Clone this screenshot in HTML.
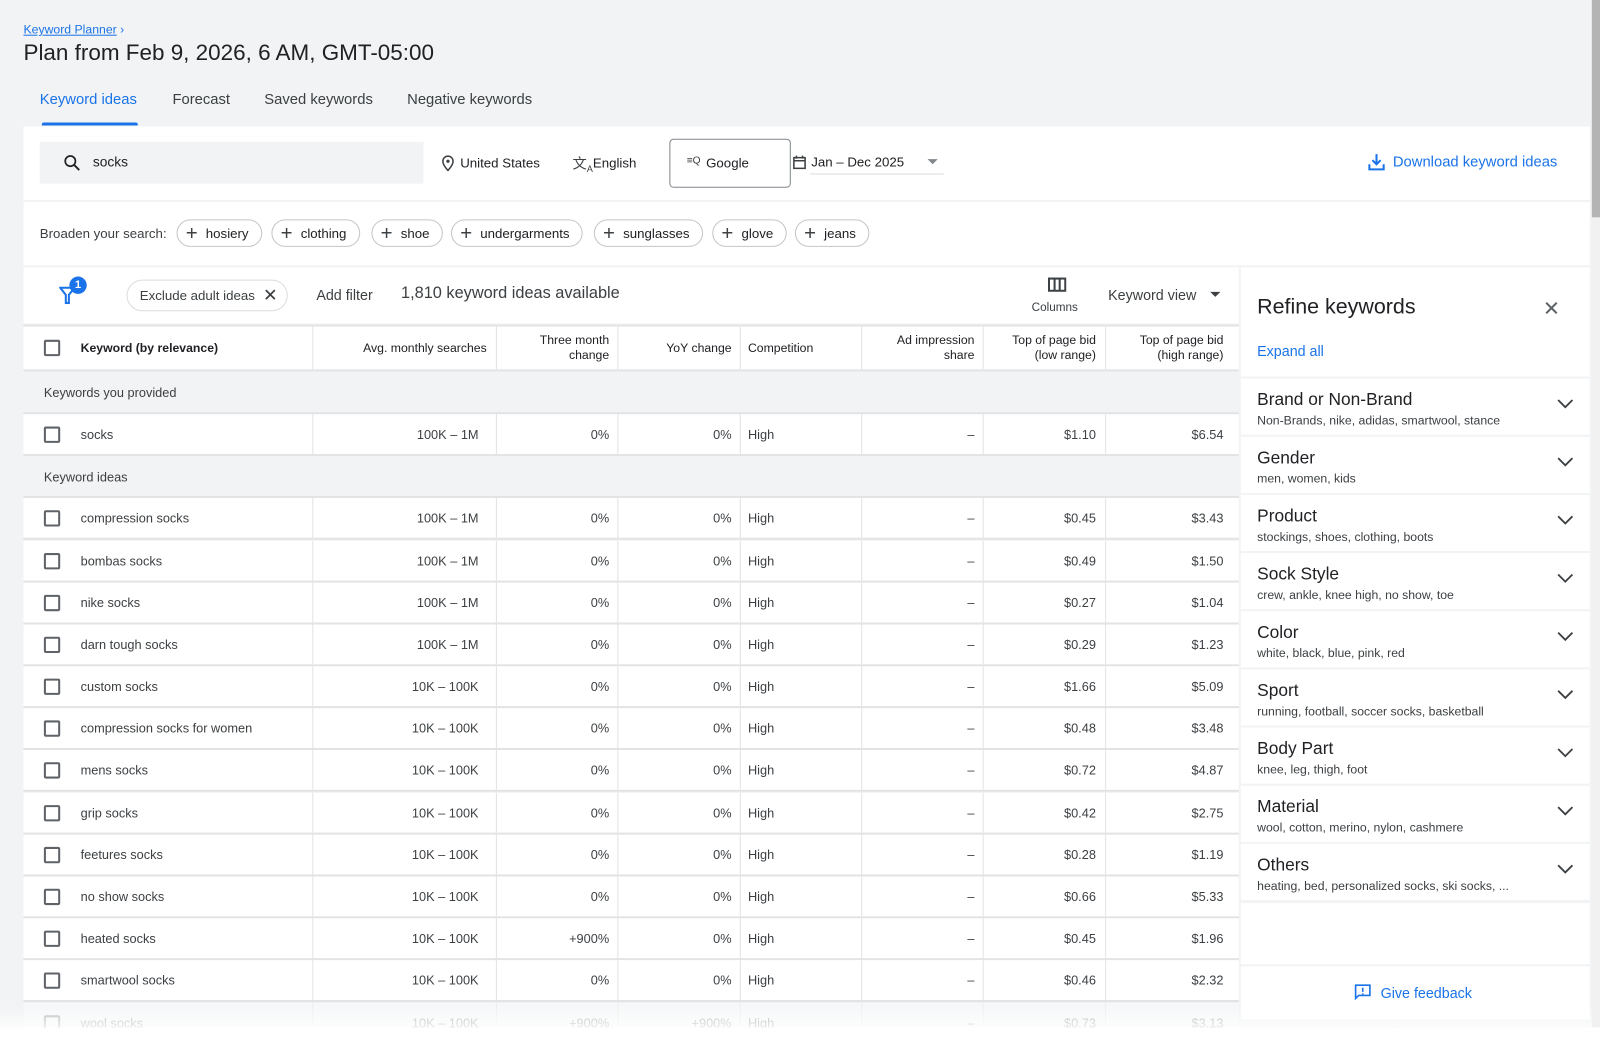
<!DOCTYPE html>
<html><head><meta charset="utf-8"><style>
*{box-sizing:border-box;margin:0;padding:0}
html,body{width:1600px;height:1038px;overflow:hidden;background:#fff}
body{font-family:"Liberation Sans",Arial,sans-serif;color:#3c4043}
#w{position:absolute;left:0;top:0;width:1568px;height:1017px;transform:scale(1.0204);transform-origin:0 0;background:#f1f3f4}
.a{position:absolute}
.blue{color:#1a73e8}
.chip{position:absolute;top:215px;height:27px;border:1px solid #c4c7c5;border-radius:14px;font-size:13px;color:#202124;line-height:25px;padding:0 12px 0 8px;background:#fff;white-space:nowrap}
.chip b{font-weight:normal;font-size:20px;vertical-align:-2px;margin-right:8px;color:#3c4043}
.row{position:absolute;left:23px;width:1191px;height:41px;background:#fff;border-bottom:2px solid #e3e3e3;font-size:12.5px;color:#3c4043}
.row span{position:absolute;top:13px;white-space:nowrap}
.cb{position:absolute;left:20px;top:12px;width:16px;height:16px;border:2px solid #5f6368;border-radius:2px}
.sec{position:absolute;left:23px;width:1191px;height:41px;background:#f1f3f4;border-bottom:2px solid #e3e3e3;font-size:12.5px;color:#3c4043;padding:14px 0 0 20px}
.vl{position:absolute;top:0;bottom:0;width:1px;background:#e3e3e3}
.r{text-align:right}
.ref{position:absolute;left:1216px;width:342px;height:55px;background:#fff}
.ref .t{position:absolute;left:16px;top:11px;font-size:17px;color:#202124}
.ref .s{position:absolute;left:16px;top:34px;font-size:12px;color:#3c4043;white-space:nowrap}
.ref svg{position:absolute;right:16px;top:20px}
</style></head><body><div id="w">

<div class="a" style="left:23px;top:22px;font-size:12px"><span class="blue" style="text-decoration:underline">Keyword Planner</span> <span class="blue">›</span></div>
<div class="a" style="left:23px;top:39px;font-size:22px;color:#202124">Plan from Feb 9, 2026, 6 AM, GMT-05:00</div>

<div class="a blue" style="left:39px;top:90px;font-size:14.5px">Keyword ideas</div>
<div class="a" style="left:41px;top:120px;width:94px;height:3px;background:#1a73e8;border-radius:2px 2px 0 0"></div>
<div class="a" style="left:169px;top:90px;font-size:14.5px">Forecast</div>
<div class="a" style="left:259px;top:90px;font-size:14.5px">Saved keywords</div>
<div class="a" style="left:399px;top:90px;font-size:14.5px">Negative keywords</div>

<div class="a" style="left:23px;top:124px;width:1535px;height:72px;background:#fff"></div>
<div class="a" style="left:39px;top:139px;width:376px;height:41px;background:#f1f3f4"></div>
<svg class="a" style="left:61px;top:150px" width="20" height="20" viewBox="0 0 24 24"><circle cx="9.5" cy="9.5" r="6" fill="none" stroke="#202124" stroke-width="2"/><path d="M14 14l6 6" stroke="#202124" stroke-width="2.2"/></svg>
<div class="a" style="left:91px;top:151px;font-size:13.5px;color:#202124">socks</div>
<svg class="a" style="left:432px;top:152px" width="14" height="16" viewBox="0 0 14 16"><path d="M7 1a5 5 0 0 0-5 5c0 4 5 9 5 9s5-5 5-9a5 5 0 0 0-5-5z" fill="none" stroke="#3c4043" stroke-width="1.5"/><circle cx="7" cy="6" r="1.6" fill="#3c4043"/></svg>
<div class="a" style="left:451px;top:152px;font-size:13px;color:#202124">United States</div>
<div class="a" style="left:561px;top:150px;font-size:14px;color:#3c4043">文<sub style="font-size:9px">A</sub></div>
<div class="a" style="left:581px;top:152px;font-size:13px;color:#202124">English</div>
<div class="a" style="left:656px;top:136px;width:119px;height:48px;border:1px solid #80868b;border-radius:4px;background:#fff"></div>
<div class="a" style="left:673px;top:152px;font-size:10px;color:#3c4043">≡Q</div>
<div class="a" style="left:692px;top:152px;font-size:13px;color:#202124">Google</div>
<svg class="a" style="left:777px;top:152px" width="13" height="14" viewBox="0 0 13 14"><rect x="1" y="2.5" width="11" height="10.5" fill="none" stroke="#3c4043" stroke-width="1.5"/><path d="M1 5.5h11M3.5 0.5v3M9.5 0.5v3" stroke="#3c4043" stroke-width="1.5"/></svg>
<div class="a" style="left:795px;top:151px;font-size:13px;color:#202124">Jan – Dec 2025</div>
<div class="a" style="left:909px;top:156px;width:0;height:0;border-left:5px solid transparent;border-right:5px solid transparent;border-top:5px solid #80868b"></div>
<div class="a" style="left:794px;top:170px;width:131px;height:1px;background:#dadce0"></div>
<svg class="a" style="left:1340px;top:150px" width="18" height="18" viewBox="0 0 18 18"><path d="M9 1v10M5 7l4 4 4-4M2 11v5h14v-5" fill="none" stroke="#1a73e8" stroke-width="2"/></svg>
<div class="a blue" style="left:1365px;top:151px;font-size:14.5px">Download keyword ideas</div>

<div class="a" style="left:23px;top:198px;width:1535px;height:62px;background:#fff"></div>
<div class="a" style="left:39px;top:221px;font-size:13px;color:#3c4043">Broaden your search:</div>
<div class="chip" style="left:173px"><b>+</b>hosiery</div>
<div class="chip" style="left:266px"><b>+</b>clothing</div>
<div class="chip" style="left:364px"><b>+</b>shoe</div>
<div class="chip" style="left:442px"><b>+</b>undergarments</div>
<div class="chip" style="left:582px"><b>+</b>sunglasses</div>
<div class="chip" style="left:698px"><b>+</b>glove</div>
<div class="chip" style="left:779px"><b>+</b>jeans</div>

<div class="a" style="left:23px;top:262px;width:1191px;height:55px;background:#fff"></div>
<svg class="a" style="left:58px;top:280px" width="16" height="18" viewBox="0 0 16 18"><path d="M1 2h14l-5.5 7v8h-3V9z" fill="none" stroke="#1a73e8" stroke-width="2"/></svg>
<div class="a" style="left:68px;top:271px;width:17px;height:17px;border-radius:50%;background:#1a73e8;color:#fff;font-size:11px;text-align:center;line-height:17px;font-weight:bold">1</div>
<div class="a" style="left:124px;top:274px;width:158px;height:31px;border:1px solid #dadce0;border-radius:16px;font-size:13px;line-height:29px;padding-left:12px;color:#3c4043">Exclude adult ideas <span style="position:absolute;right:9px;font-size:17px">✕</span></div>
<div class="a" style="left:310px;top:281px;font-size:14px">Add filter</div>
<div class="a" style="left:393px;top:279px;font-size:16px;color:#3c4043">1,810 keyword ideas available</div>
<svg class="a" style="left:1027px;top:272px" width="18" height="14" viewBox="0 0 18 14"><rect x="1" y="1" width="16" height="12" fill="none" stroke="#3c4043" stroke-width="2"/><path d="M6.5 1v12M11.5 1v12" stroke="#3c4043" stroke-width="2"/></svg>
<div class="a" style="left:1011px;top:296px;font-size:11.5px">Columns</div>
<div class="a" style="left:1086px;top:281px;font-size:14px">Keyword view</div>
<div class="a" style="left:1186px;top:286px;width:0;height:0;border-left:5px solid transparent;border-right:5px solid transparent;border-top:5px solid #3c4043"></div>

<div class="row" style="top:318px;height:46px;border-top:2px solid #e3e3e3;font-size:12px;color:#202124">
<div class="vl" style="left:283px"></div><div class="vl" style="left:463px"></div><div class="vl" style="left:582px"></div><div class="vl" style="left:702px"></div><div class="vl" style="left:821px"></div><div class="vl" style="left:940px"></div><div class="vl" style="left:1060px"></div>
<div class="cb" style="top:13px"></div>
<span style="left:56px;top:14px;font-weight:bold">Keyword (by relevance)</span>
<span class="r" style="right:737px;top:14px">Avg. monthly searches</span>
<span class="r" style="right:617px;top:6px;line-height:15px">Three month<br>change</span>
<span class="r" style="right:497px;top:14px">YoY change</span>
<span style="left:710px;top:14px">Competition</span>
<span class="r" style="right:259px;top:6px;line-height:15px">Ad impression<br>share</span>
<span class="r" style="right:140px;top:6px;line-height:15px">Top of page bid<br>(low range)</span>
<span class="r" style="right:15px;top:6px;line-height:15px">Top of page bid<br>(high range)</span>
</div>
<div class="sec" style="top:364px;height:42px">Keywords you provided</div>

<div id="rows"></div>

<div class="a" style="left:1216px;top:262px;width:342px;height:107px;background:#fff"></div>
<div class="a" style="left:1232px;top:289px;font-size:21px;color:#202124">Refine keywords</div>
<div class="a" style="left:1512px;top:290px;font-size:20px;color:#5f6368">✕</div>
<div class="a blue" style="left:1232px;top:336px;font-size:14px">Expand all</div>

<div class="ref" style="top:371px"><div class="t">Brand or Non-Brand</div><div class="s">Non-Brands, nike, adidas, smartwool, stance</div><svg width="16" height="10" viewBox="0 0 16 10"><path d="M1 1l7 7 7-7" fill="none" stroke="#3c4043" stroke-width="1.8"/></svg></div>
<div class="ref" style="top:428px"><div class="t">Gender</div><div class="s">men, women, kids</div><svg width="16" height="10" viewBox="0 0 16 10"><path d="M1 1l7 7 7-7" fill="none" stroke="#3c4043" stroke-width="1.8"/></svg></div>
<div class="ref" style="top:485px"><div class="t">Product</div><div class="s">stockings, shoes, clothing, boots</div><svg width="16" height="10" viewBox="0 0 16 10"><path d="M1 1l7 7 7-7" fill="none" stroke="#3c4043" stroke-width="1.8"/></svg></div>
<div class="ref" style="top:542px"><div class="t">Sock Style</div><div class="s">crew, ankle, knee high, no show, toe</div><svg width="16" height="10" viewBox="0 0 16 10"><path d="M1 1l7 7 7-7" fill="none" stroke="#3c4043" stroke-width="1.8"/></svg></div>
<div class="ref" style="top:599px"><div class="t">Color</div><div class="s">white, black, blue, pink, red</div><svg width="16" height="10" viewBox="0 0 16 10"><path d="M1 1l7 7 7-7" fill="none" stroke="#3c4043" stroke-width="1.8"/></svg></div>
<div class="ref" style="top:656px"><div class="t">Sport</div><div class="s">running, football, soccer socks, basketball</div><svg width="16" height="10" viewBox="0 0 16 10"><path d="M1 1l7 7 7-7" fill="none" stroke="#3c4043" stroke-width="1.8"/></svg></div>
<div class="ref" style="top:713px"><div class="t">Body Part</div><div class="s">knee, leg, thigh, foot</div><svg width="16" height="10" viewBox="0 0 16 10"><path d="M1 1l7 7 7-7" fill="none" stroke="#3c4043" stroke-width="1.8"/></svg></div>
<div class="ref" style="top:770px"><div class="t">Material</div><div class="s">wool, cotton, merino, nylon, cashmere</div><svg width="16" height="10" viewBox="0 0 16 10"><path d="M1 1l7 7 7-7" fill="none" stroke="#3c4043" stroke-width="1.8"/></svg></div>
<div class="ref" style="top:827px"><div class="t">Others</div><div class="s">heating, bed, personalized socks, ski socks, ...</div><svg width="16" height="10" viewBox="0 0 16 10"><path d="M1 1l7 7 7-7" fill="none" stroke="#3c4043" stroke-width="1.8"/></svg></div>
<div class="a" style="left:1216px;top:885px;width:342px;height:60px;background:#fff"></div>
<div class="a" style="left:1216px;top:947px;width:342px;height:52px;background:#fff"></div>
<svg class="a" style="left:1327px;top:964px" width="17" height="17" viewBox="0 0 17 17"><path d="M1.5 1.5h14v10h-11l-3 3z" fill="none" stroke="#1a73e8" stroke-width="1.6"/><path d="M8.5 4v4M8.5 9.5v1.2" stroke="#1a73e8" stroke-width="1.6"/></svg>
<div class="a blue" style="left:1353px;top:965px;font-size:14px">Give feedback</div>

<div class="a" style="left:1560px;top:0;width:8px;height:1017px;background:#f1f1f1"></div>
<div class="a" style="left:1560px;top:0;width:8px;height:213px;background:#b4b4b4"></div>

<div class="a" style="left:0;top:985px;width:1560px;height:22px;background:linear-gradient(rgba(255,255,255,0),rgba(255,255,255,0.75))"></div>
<div class="a" style="left:0;top:1007px;width:1568px;height:20px;background:#fff"></div>

<script>
var d=[["socks","100K – 1M","0%","0%","$1.10","$6.54"],null,
["compression socks","100K – 1M","0%","0%","$0.45","$3.43"],
["bombas socks","100K – 1M","0%","0%","$0.49","$1.50"],
["nike socks","100K – 1M","0%","0%","$0.27","$1.04"],
["darn tough socks","100K – 1M","0%","0%","$0.29","$1.23"],
["custom socks","10K – 100K","0%","0%","$1.66","$5.09"],
["compression socks for women","10K – 100K","0%","0%","$0.48","$3.48"],
["mens socks","10K – 100K","0%","0%","$0.72","$4.87"],
["grip socks","10K – 100K","0%","0%","$0.42","$2.75"],
["feetures socks","10K – 100K","0%","0%","$0.28","$1.19"],
["no show socks","10K – 100K","0%","0%","$0.66","$5.33"],
["heated socks","10K – 100K","+900%","0%","$0.45","$1.96"],
["smartwool socks","10K – 100K","0%","0%","$0.46","$2.32"],
["wool socks","10K – 100K","+900%","+900%","$0.73","$3.13"]];
var h="",y=406;
d.forEach(function(r,i){
 var t=Math.round(y);
 if(!r){h+='<div class="sec" style="top:'+t+'px">Keyword ideas</div>';y+=41.18;return;}
 var op=i==d.length-1?'opacity:.4;':'';
 h+='<div class="row" style="top:'+t+'px;'+op+'"><div class="vl" style="left:283px"></div><div class="vl" style="left:463px"></div><div class="vl" style="left:582px"></div><div class="vl" style="left:702px"></div><div class="vl" style="left:821px"></div><div class="vl" style="left:940px"></div><div class="vl" style="left:1060px"></div><div class="cb"></div>'+
 '<span style="left:56px">'+r[0]+'</span><span style="right:745px">'+r[1]+'</span><span style="right:617px">'+r[2]+'</span><span style="right:497px">'+r[3]+'</span><span style="left:710px">High</span><span style="right:259px">–</span><span style="right:140px">'+r[4]+'</span><span style="right:15px">'+r[5]+'</span></div>';
 y+=41.18;});
document.getElementById("rows").outerHTML=h;
</script>
</div></body></html>
